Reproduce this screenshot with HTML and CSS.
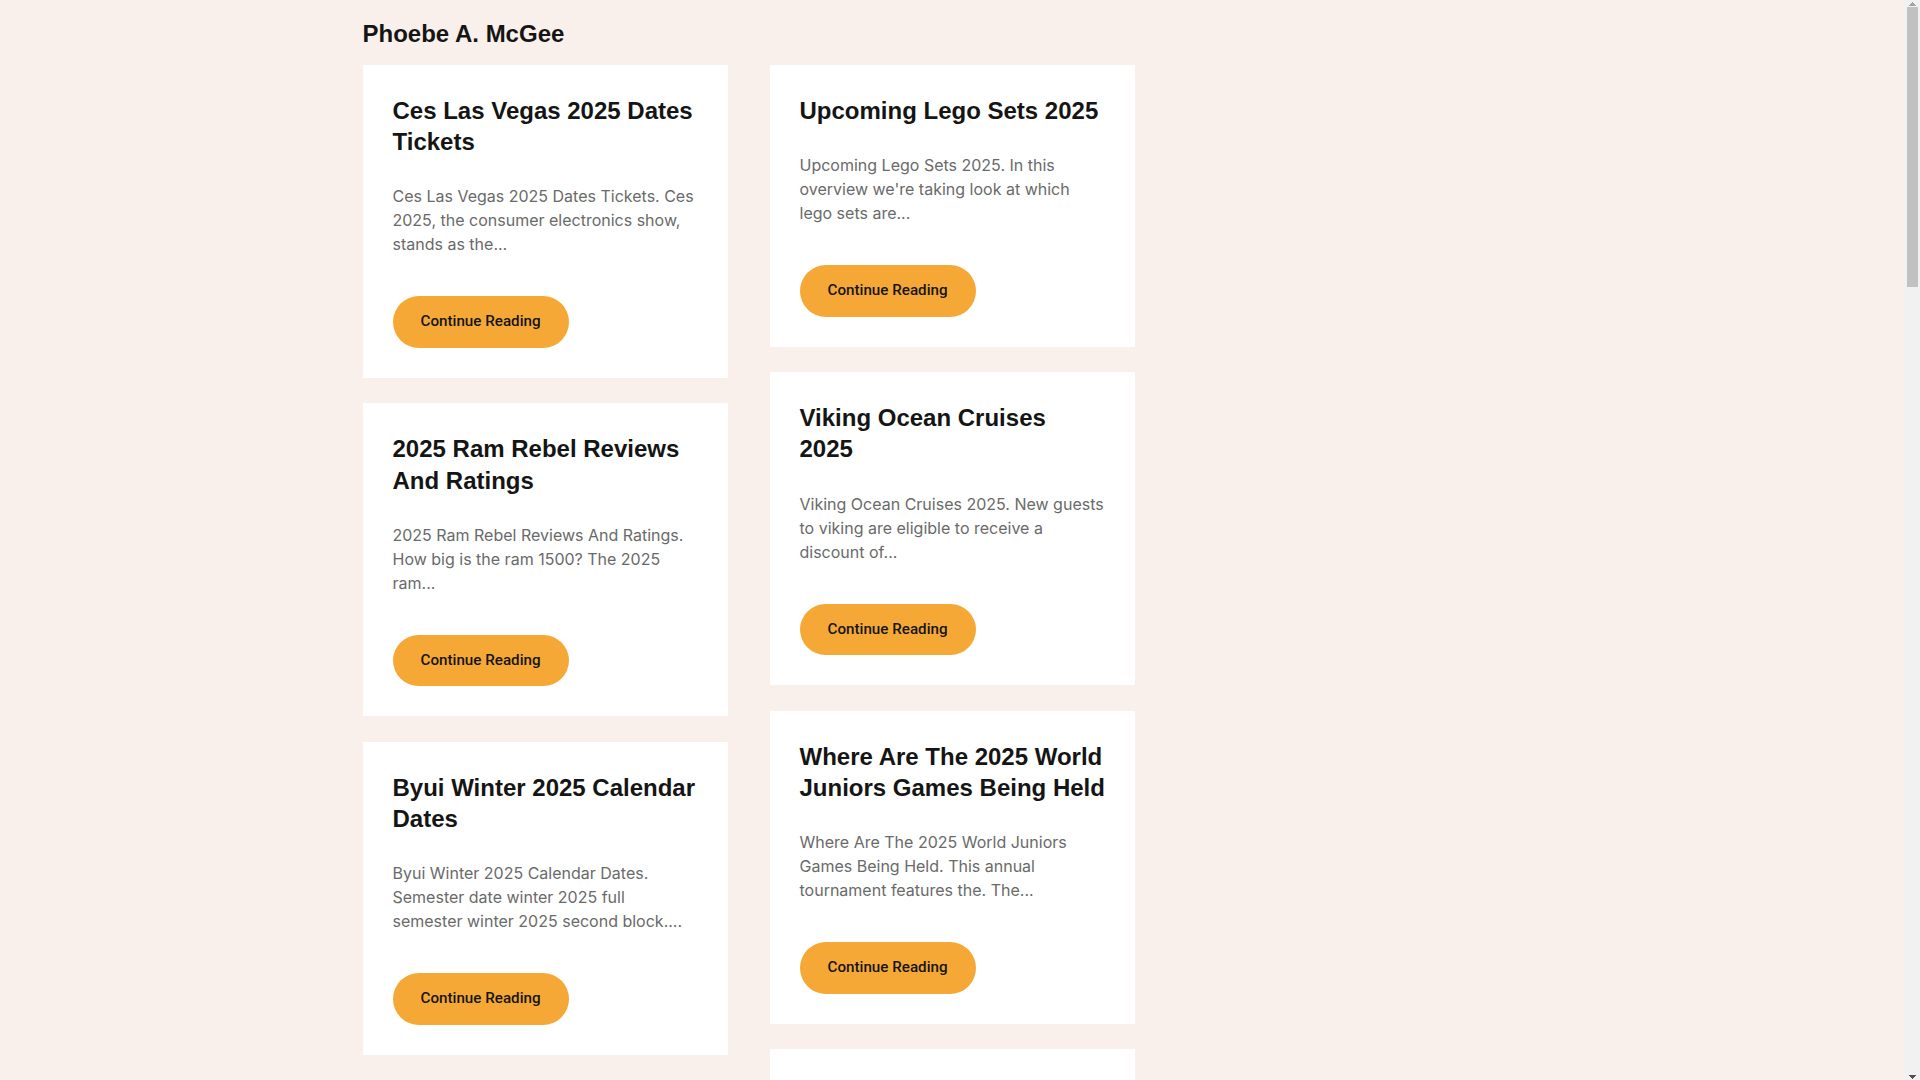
FILE: index.html
```html
<!DOCTYPE html>
<html lang="en">
<head>
<meta charset="utf-8">
<title>Phoebe A. McGee</title>
<link rel="stylesheet" href="styles.css">
</head>
<body>
<div class="page">
<div class="container">
  <header class="site-header">
    <h1 class="site-title">Phoebe A. McGee</h1>
  </header>
  <main class="posts">
    <div class="col">
      <article class="card">
        <h2 class="card-title">Ces Las Vegas 2025 Dates Tickets</h2>
        <p class="card-excerpt">Ces Las Vegas 2025 Dates Tickets. Ces 2025, the consumer electronics show, stands as the...</p>
        <a class="btn" href="#">Continue Reading</a>
      </article>
      <article class="card">
        <h2 class="card-title">2025 Ram Rebel Reviews And Ratings</h2>
        <p class="card-excerpt">2025 Ram Rebel Reviews And Ratings. How big is the ram 1500? The 2025 ram...</p>
        <a class="btn" href="#">Continue Reading</a>
      </article>
      <article class="card">
        <h2 class="card-title">Byui Winter 2025 Calendar Dates</h2>
        <p class="card-excerpt">Byui Winter 2025 Calendar Dates. Semester date winter 2025 full semester winter 2025 second block....</p>
        <a class="btn" href="#">Continue Reading</a>
      </article>
      <article class="card">
        <h2 class="card-title">Nfl Draft 2025 Mock Draft</h2>
        <p class="card-excerpt">Nfl Draft 2025 Mock Draft. The latest projections for every pick in the first round...</p>
        <a class="btn" href="#">Continue Reading</a>
      </article>
      <article class="card">
        <h2 class="card-title">Best Cars Of 2025 Under 30k</h2>
        <p class="card-excerpt">Best Cars Of 2025 Under 30k. Looking for an affordable new car that still offers...</p>
        <a class="btn" href="#">Continue Reading</a>
      </article>
      <article class="card">
        <h2 class="card-title">Easter Sunday 2025 Date</h2>
        <p class="card-excerpt">Easter Sunday 2025 Date. When is easter in 2025 and how is the date calculated...</p>
        <a class="btn" href="#">Continue Reading</a>
      </article>
    </div>
    <div class="col">
      <article class="card">
        <h2 class="card-title">Upcoming Lego Sets 2025</h2>
        <p class="card-excerpt">Upcoming Lego Sets 2025. In this overview we're taking look at which lego sets are...</p>
        <a class="btn" href="#">Continue Reading</a>
      </article>
      <article class="card">
        <h2 class="card-title">Viking Ocean Cruises 2025</h2>
        <p class="card-excerpt">Viking Ocean Cruises 2025. New guests to viking are eligible to receive a discount of...</p>
        <a class="btn" href="#">Continue Reading</a>
      </article>
      <article class="card">
        <h2 class="card-title">Where Are The 2025 World Juniors Games Being Held</h2>
        <p class="card-excerpt">Where Are The 2025 World Juniors Games Being Held. This annual tournament features the. The...</p>
        <a class="btn" href="#">Continue Reading</a>
      </article>
      <article class="card">
        <h2 class="card-title">2025 Honda Pilot Changes</h2>
        <p class="card-excerpt">2025 Honda Pilot Changes. The popular three row suv returns with several updates...</p>
        <a class="btn" href="#">Continue Reading</a>
      </article>
      <article class="card">
        <h2 class="card-title">Super Bowl 2025 Location</h2>
        <p class="card-excerpt">Super Bowl 2025 Location. The big game heads to new orleans for the...</p>
        <a class="btn" href="#">Continue Reading</a>
      </article>
      <article class="card">
        <h2 class="card-title">Disney World Tickets 2025 Prices</h2>
        <p class="card-excerpt">Disney World Tickets 2025 Prices. Planning a trip to the parks next year means...</p>
        <a class="btn" href="#">Continue Reading</a>
      </article>
    </div>
  </main>
</div>
</div>
<div class="scrollbar" aria-hidden="true">
  <div class="sb-arrow sb-up"></div>
  <div class="sb-thumb"></div>
  <div class="sb-rest"></div>
  <div class="sb-arrow sb-down"></div>
</div>
</body>
</html>
```

FILE: styles.css
```css
html, body {
  margin: 0;
  padding: 0;
  height: 100%;
  overflow: hidden;
}

body {
  display: flex;
  background: #faf0eb;
  color: #151515;
  font-family: "Liberation Sans", Arial, sans-serif;
}

.page {
  flex: 1;
  height: 100vh;
  overflow-y: auto;
  scrollbar-width: none;
}

.page::-webkit-scrollbar {
  display: none;
}

.scrollbar {
  width: 15px;
  flex: none;
  height: 100vh;
  background: #f1f1f1;
  display: flex;
  flex-direction: column;
}

.sb-arrow {
  height: 7px;
  flex: none;
  background-repeat: no-repeat;
  background-size: 7px 4px;
  background-position: center;
}

.sb-up {
  background-image: conic-gradient(from 135deg at 50% 0, #a3a3a3 90deg, transparent 0);
}

.sb-down {
  background-image: conic-gradient(from -45deg at 50% 100%, #505050 90deg, transparent 0);
}

.sb-thumb {
  height: 280px;
  margin: 0 2px;
  background: #c1c1c1;
  flex: none;
}

.sb-rest {
  flex: 1;
}

.container {
  width: 1180px;
  margin: 0 auto;
}

.site-header {
  padding-top: 18px;
  padding-bottom: 16px;
}

.site-title {
  margin: 0;
  font-size: 24px;
  line-height: 31px;
  font-weight: 700;
  color: #151515;
}

.posts {
  display: flex;
  gap: 42px;
  align-items: flex-start;
}

.col {
  width: 365px;
  display: flex;
  flex-direction: column;
  gap: 25.6px;
}

.card {
  background: #ffffff;
  padding: 30px 29px 30px 30px;
}

.card-title {
  margin: 0;
  font-size: 24px;
  line-height: 1.3;
  font-weight: 700;
  color: #151515;
}

.card-excerpt {
  margin: 27px 0 0;
  font-family: "Inter", "Noto Sans", sans-serif;
  font-size: 16px;
  line-height: 24px;
  color: #6a6a6a;
}

.btn {
  display: inline-block;
  margin-top: 40px;
  padding: 0 28px;
  height: 51.5px;
  line-height: 51.5px;
  border-radius: 26px;
  background: #f5a836;
  color: #151515;
  font-family: "Roboto", "Inter", sans-serif;
  font-weight: 500;
  font-size: 15.2px;
  text-decoration: none;
}
```
